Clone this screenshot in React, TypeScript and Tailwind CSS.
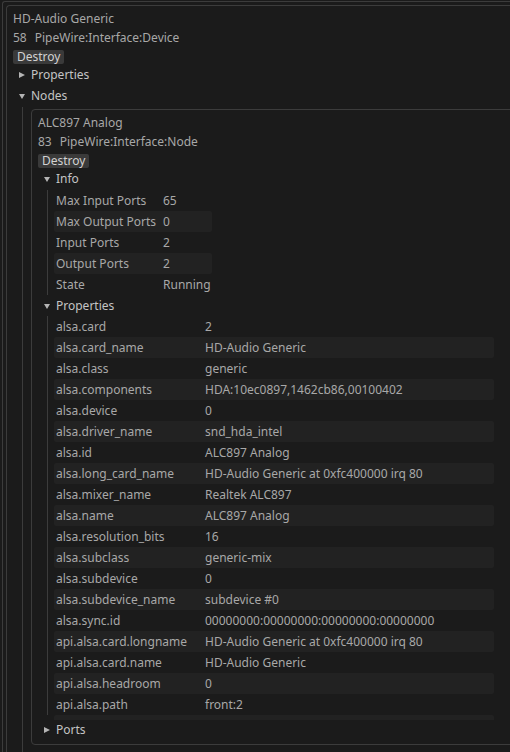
import React from 'react'

type Row = [string, string]

const infoRows: Row[] = [
  ['Max Input Ports', '65'],
  ['Max Output Ports', '0'],
  ['Input Ports', '2'],
  ['Output Ports', '2'],
  ['State', 'Running'],
]

const propRows: Row[] = [
  ['alsa.card', '2'],
  ['alsa.card_name', 'HD-Audio Generic'],
  ['alsa.class', 'generic'],
  ['alsa.components', 'HDA:10ec0897,1462cb86,00100402'],
  ['alsa.device', '0'],
  ['alsa.driver_name', 'snd_hda_intel'],
  ['alsa.id', 'ALC897 Analog'],
  ['alsa.long_card_name', 'HD-Audio Generic at 0xfc400000 irq 80'],
  ['alsa.mixer_name', 'Realtek ALC897'],
  ['alsa.name', 'ALC897 Analog'],
  ['alsa.resolution_bits', '16'],
  ['alsa.subclass', 'generic-mix'],
  ['alsa.subdevice', '0'],
  ['alsa.subdevice_name', 'subdevice #0'],
  ['alsa.sync.id', '00000000:00000000:00000000:00000000'],
  ['api.alsa.card.longname', 'HD-Audio Generic at 0xfc400000 irq 80'],
  ['api.alsa.card.name', 'HD-Audio Generic'],
  ['api.alsa.headroom', '0'],
  ['api.alsa.path', 'front:2'],
  ['api.alsa.pcm.card', '2'],
]

const Arrow = ({ open }: { open: boolean }) =>
  open ? (
    <svg width="6" height="5" viewBox="0 0 6 5">
      <polygon points="0,0 6,0 3,5" fill="#b4b4b4" />
    </svg>
  ) : (
    <svg width="6" height="6" viewBox="0 0 6 6">
      <polygon points="0,0 6,3 0,6" fill="#b4b4b4" />
    </svg>
  )

const Header = ({ label, open, className }: { label: string; open: boolean; className: string }) => (
  <div className={`flex h-[18px] items-center text-[#c4c4c4] ${className}`}>
    <div className="flex w-[18px] justify-center">
      <Arrow open={open} />
    </div>
    <span className="leading-[18px]">{label}</span>
  </div>
)

const Grid = ({ rows, wide }: { rows: Row[]; wide: boolean }) => (
  <>
    {rows.map(([k, v], i) => (
      <div
        key={k}
        className={`flex h-[21px] shrink-0 items-center rounded-[2px] pl-[2px] leading-[21px] ${wide ? 'w-[440px]' : 'w-[158px]'} ${
          i % 2 ? 'bg-[#222222]' : ''
        }`}
      >
        <span className={`shrink-0 whitespace-nowrap ${wide ? 'w-[149px]' : 'w-[107px]'}`}>{k}</span>
        <span className="whitespace-nowrap">{v}</span>
      </div>
    ))}
  </>
)

const Destroy = () => (
  <div className="mt-[3px] flex">
    <button className="h-[14px] rounded-[2px] bg-[#3a3a3a] px-[4px] leading-[14px] text-[#d2d2d2]">Destroy</button>
  </div>
)

export default function App() {
  return (
    <div className="h-[752px] w-[510px] overflow-hidden bg-[#1b1b1b] font-['Noto_Sans','Open_Sans',sans-serif] text-[12px] text-[#a8a8a8]">
      <div className="ml-[2px] mt-[1px] h-[900px] w-[800px] rounded-tl-[3px] border-l border-t border-[#3c3c3c] pl-[3px] pt-[3px]">
        <div className="h-[880px] w-[760px] rounded-tl-[4px] border-l border-t border-[#3c3c3c] pl-[6px] pt-[3px]">
          <div className="h-[19px] leading-[19px]">HD-Audio Generic</div>
          <div className="flex h-[19px] gap-[8px] leading-[19px]">
            <span>58</span>
            <span>PipeWire:Interface:Device</span>
          </div>
          <Destroy />
          <Header label="Properties" open={false} className="mt-[2px]" />
          <Header label="Nodes" open={true} className="mt-[3px]" />

          <div className="ml-[9px] mt-[2px] h-[800px] border-l border-[#3c3c3c] pl-[8px] pt-[2px]">
            <div className="w-[700px] rounded-l-[4px] border border-[#3c3c3c] pb-[5px] pl-[6px] pt-[3px]">
              <div className="h-[19px] leading-[19px]">ALC897 Analog</div>
              <div className="flex h-[19px] gap-[8px] leading-[19px]">
                <span>83</span>
                <span>PipeWire:Interface:Node</span>
              </div>
              <Destroy />

              <Header label="Info" open={true} className="mt-[2px]" />
              <div className="ml-[9px] mt-[2px] flex flex-col border-l border-[#3c3c3c] pl-[6px]">
                <Grid rows={infoRows} wide={false} />
              </div>

              <Header label="Properties" open={true} className="mt-[2px]" />
              <div className="ml-[9px] mt-[1px] h-[399px] border-l border-[#3c3c3c] pl-[6px]">
                <div className="flex h-[404px] flex-col overflow-hidden">
                  <Grid rows={propRows} wide={true} />
                </div>
              </div>

              <Header label="Ports" open={false} className="mt-[6px]" />
            </div>
          </div>
        </div>
      </div>
    </div>
  )
}
